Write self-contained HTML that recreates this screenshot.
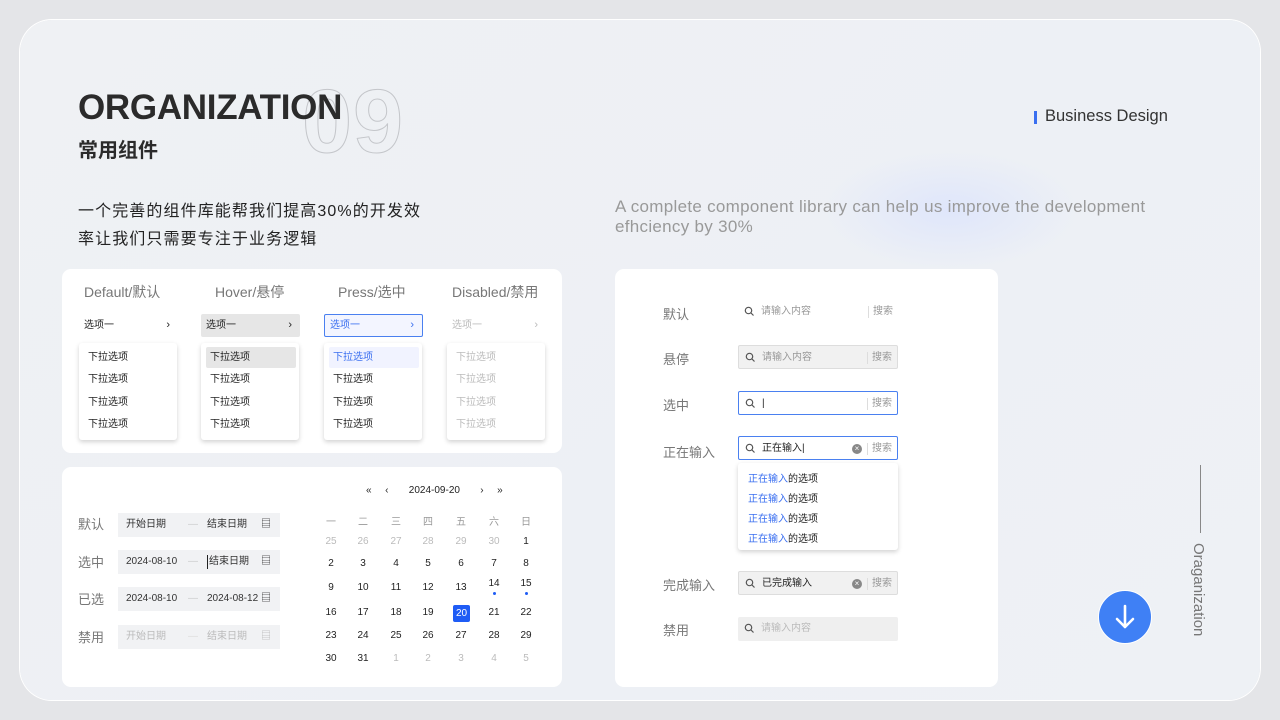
<!DOCTYPE html>
<html><head><meta charset="utf-8"><style>
*{margin:0;padding:0;box-sizing:border-box}
body{width:1280px;height:720px;overflow:hidden;background:#e4e5e8;font-family:"Liberation Sans","Noto Sans CJK SC",sans-serif;position:relative;color:#222}
.abs{position:absolute}
.card{left:20px;top:20px;width:1240px;height:680px;border-radius:32px;background:linear-gradient(135deg,#eff1f4 0%,#edf0f5 60%,#eef1f5 100%);box-shadow:0 0 0 1px #fff}
.glow{left:820px;top:150px;width:260px;height:120px;border-radius:50%;background:radial-gradient(ellipse,#dfe6fb 0%,rgba(238,241,245,0) 70%)}
.panel{background:#fff;border-radius:9px}
.t{position:absolute;white-space:nowrap}
.hd{font-size:14px;color:#777;top:282px}
.sel{position:absolute;top:314px;height:23px;font-size:10px;line-height:23px;padding-left:5px;border-radius:2px}
.sel i{position:absolute;right:8px;font-style:normal;font-size:11px}
.menu{position:absolute;top:343px;width:98px;height:97px;background:#fff;border-radius:3px;box-shadow:0 2px 5px rgba(0,0,0,.18)}
.menu div{position:absolute;left:5px;width:90px;height:21px;line-height:21px;font-size:10px;padding-left:4px;border-radius:2px}
.lbl{position:absolute;font-size:13px;color:#777}
.di{position:absolute;left:118px;width:162px;height:24px;background:#f1f2f4;font-size:10px;line-height:24px;color:#333}
.di span{position:absolute}
.cal{position:absolute;font-size:10px;color:#222;width:24px;text-align:center}
.si{position:absolute;left:738px;width:160px;height:24px;border-radius:2px;font-size:10px;line-height:12px}
.si .s{position:absolute;right:5px;top:6px;color:#999;border-left:1px solid #ddd;padding-left:4px}
.si svg{position:absolute;left:6px;top:6px}
.si .tx{position:absolute;left:23px;top:6px}
.si .x{position:absolute;right:35px;top:7px;width:10px;height:10px;border-radius:50%;background:#888;color:#fff;font-size:8px;line-height:10px;text-align:center}
</style></head><body>
<div class="abs card"></div>
<div class="abs glow"></div>

<div class="t" style="left:302px;top:72px;font-size:90px;font-weight:bold;color:transparent;-webkit-text-stroke:1px #c4c6ca;letter-spacing:1px;line-height:100px">09</div>
<div class="t" style="left:78px;top:86px;font-size:35px;font-weight:bold;color:#2b2b2b;line-height:44px;letter-spacing:-0.3px">ORGANIZATION</div>
<div class="t" style="left:78px;top:134px;font-size:20px;font-weight:bold;color:#2b2b2b">常用组件</div>
<div class="t" style="left:78px;top:198px;font-size:16px;color:#222;line-height:28px;letter-spacing:1.1px">一个完善的组件库能帮我们提高30%的开发效<br>率让我们只需要专注于业务逻辑</div>
<div class="t" style="left:615px;top:197px;font-size:17px;color:#999;line-height:20px;letter-spacing:0.3px">A complete component library can help us improve the development<br>efhciency by 30%</div>
<div class="abs" style="left:1034px;top:111px;width:3px;height:13px;background:#3a6ff0"></div>
<div class="t" style="left:1045px;top:107px;font-size:16.5px;color:#333">Business Design</div>

<!-- dropdown panel -->
<div class="abs panel" style="left:62px;top:269px;width:500px;height:184px"></div>
<div class="t hd" style="left:84px">Default/默认</div>
<div class="t hd" style="left:215px">Hover/悬停</div>
<div class="t hd" style="left:338px">Press/选中</div>
<div class="t hd" style="left:452px">Disabled/禁用</div>
<div class="sel" style="left:79px;width:99px;color:#222">选项一<i>›</i></div>
<div class="sel" style="left:201px;width:99px;background:#e6e6e6;color:#222">选项一<i>›</i></div>
<div class="sel" style="left:324px;width:99px;border:1px solid #4a80f0;background:#f3f5ff;color:#3a6ff0;line-height:21px">选项一<i>›</i></div>
<div class="sel" style="left:447px;width:99px;color:#bbb">选项一<i>›</i></div>
<div class="menu" style="left:79px"><div style="top:4px">下拉选项</div><div style="top:26px">下拉选项</div><div style="top:49px">下拉选项</div><div style="top:71px">下拉选项</div></div>
<div class="menu" style="left:201px"><div style="top:4px;background:#e6e6e6">下拉选项</div><div style="top:26px">下拉选项</div><div style="top:49px">下拉选项</div><div style="top:71px">下拉选项</div></div>
<div class="menu" style="left:324px"><div style="top:4px;background:#f1f3ff;color:#3a6ff0">下拉选项</div><div style="top:26px">下拉选项</div><div style="top:49px">下拉选项</div><div style="top:71px">下拉选项</div></div>
<div class="menu" style="left:447px;color:#bbb"><div style="top:4px">下拉选项</div><div style="top:26px">下拉选项</div><div style="top:49px">下拉选项</div><div style="top:71px">下拉选项</div></div>

<!-- date panel -->
<div class="abs panel" style="left:62px;top:467px;width:500px;height:220px"></div>
<div class="lbl" style="left:78px;top:514px">默认</div>
<div class="lbl" style="left:78px;top:552px">选中</div>
<div class="lbl" style="left:78px;top:589px">已选</div>
<div class="lbl" style="left:78px;top:627px">禁用</div>
<div class="di" style="top:513px"><span style="left:8px">开始日期</span><span style="left:70px;color:#ccc">—</span><span style="left:89px">结束日期</span><span style="left:143px">▤</span></div>
<div class="di" style="top:550px"><span style="left:8px">2024-08-10</span><span style="left:70px;color:#ccc">—</span><span style="left:89px;border-left:1px solid #222;padding-left:1px;line-height:14px;top:5px">结束日期</span><span style="left:143px">▤</span></div>
<div class="di" style="top:587px"><span style="left:8px">2024-08-10</span><span style="left:70px;color:#ccc">—</span><span style="left:89px">2024-08-12</span><span style="left:143px">▤</span></div>
<div class="di" style="top:625px;color:#bbb"><span style="left:8px">开始日期</span><span style="left:70px;color:#ddd">—</span><span style="left:89px">结束日期</span><span style="left:143px">▤</span></div>

<div class="t" style="left:366px;top:485px;font-size:10px;color:#222;word-spacing:4px">«&nbsp; ‹ &nbsp;&nbsp;2024-09-20 &nbsp;&nbsp;› &nbsp;»</div>
<div id="cal"></div>

<!-- search panel -->
<div class="abs panel" style="left:615px;top:269px;width:383px;height:418px"></div>
<div class="lbl" style="left:663px;top:304px">默认</div>
<div class="lbl" style="left:663px;top:349px">悬停</div>
<div class="lbl" style="left:663px;top:395px">选中</div>
<div class="lbl" style="left:663px;top:442px">正在输入</div>
<div class="lbl" style="left:663px;top:575px">完成输入</div>
<div class="lbl" style="left:663px;top:620px">禁用</div>
<div id="search"></div>
<div class="abs" style="left:738px;top:463px;width:160px;height:87px;background:#fff;border-radius:3px;box-shadow:0 2px 5px rgba(0,0,0,.18);font-size:10px">
<div class="t" style="left:10px;top:7px"><span style="color:#3a6ff0">正在输入</span>的选项</div>
<div class="t" style="left:10px;top:27px"><span style="color:#3a6ff0">正在输入</span>的选项</div>
<div class="t" style="left:10px;top:47px"><span style="color:#3a6ff0">正在输入</span>的选项</div>
<div class="t" style="left:10px;top:67px"><span style="color:#3a6ff0">正在输入</span>的选项</div>
</div>

<!-- right deco -->
<div class="abs" style="left:1200px;top:465px;width:1px;height:68px;background:#888"></div>
<div class="t" style="left:1190px;top:543px;font-size:15px;color:#777;writing-mode:vertical-rl">Oraganization</div>
<div class="abs" style="left:1098px;top:590px;width:54px;height:54px;border-radius:50%;background:#3f80f5;border:1px solid #fff"></div>
<svg class="abs" style="left:1098px;top:590px" width="54" height="54" viewBox="0 0 54 54"><path d="M27 16V37M19 29L27 37L35 29" stroke="#fff" stroke-width="2.6" fill="none" stroke-linecap="round" stroke-linejoin="round"/></svg>

<script>
var c=document.getElementById('cal'),h='';
var xs=[331,363,396,428,461,494,526];
var wd=['一','二','三','四','五','六','日'];
wd.forEach(function(w,i){h+='<div class="cal" style="left:'+(xs[i]-12)+'px;top:513px;color:#999">'+w+'</div>'});
var rows=[[25,26,27,28,29,30,1],[2,3,4,5,6,7,8],[9,10,11,12,13,14,15],[16,17,18,19,20,21,22],[23,24,25,26,27,28,29],[30,31,1,2,3,4,5]];
var ys=[536,558,582,607,630,653];
rows.forEach(function(r,ri){r.forEach(function(d,i){
var g=(ri==0&&i<6)||(ri==5&&i>1);var col=g?'#bbb':'#222';var st='';
if(ri==3&&i==4){st='background:#1f5cf5;color:#fff;border-radius:2px;height:17px;width:17px;left:'+(xs[i]-8)+'px;top:'+(ys[ri]-2)+'px;line-height:17px';h+='<div class="cal" style="'+st+'">'+d+'</div>';return;}
var y=ys[ri];if(ri==2&&i>4){y-=4;h+='<div class="abs" style="left:'+(xs[i]-1)+'px;top:'+(y+14)+'px;width:3px;height:3px;border-radius:50%;background:#1f5cf5"></div>'}
h+='<div class="cal" style="left:'+(xs[i]-12)+'px;top:'+y+'px;color:'+col+'">'+d+'</div>';})});
c.innerHTML=h;
var ic='<svg width="11" height="11" viewBox="0 0 11 11"><circle cx="4.5" cy="4.5" r="3.2" stroke="#555" stroke-width="1.2" fill="none"/><path d="M7 7L9.5 9.5" stroke="#555" stroke-width="1.2"/></svg>';
var S=[[300,'','#999','请输入内容',''],[345,'background:#f1f1f1;border:1px solid #ddd;','#999','请输入内容',''],[391,'border:1px solid #4a80f0;','#222','|',''],[436,'border:1px solid #4a80f0;','#222','正在输入|','x'],[571,'background:#f1f1f1;border:1px solid #ddd;','#222','已完成输入','x'],[617,'background:#efefef;','#bbb','请输入内容','d']];
var o='';S.forEach(function(s){o+='<div class="si" style="top:'+s[0]+'px;'+s[1]+'">'+ic+'<span class="tx" style="color:'+s[2]+'">'+s[3]+'</span>'+(s[4]=='x'?'<span class="x">×</span>':'')+(s[4]=='d'?'':'<span class="s">搜索</span>')+'</div>'});
document.getElementById('search').innerHTML=o;
</script>
</body></html>
